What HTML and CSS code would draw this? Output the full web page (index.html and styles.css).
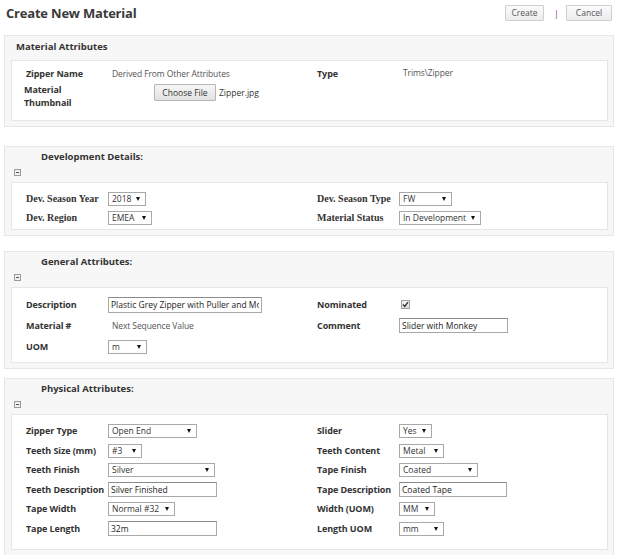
FILE: index.html
```html
<!DOCTYPE html>
<html>
<head>
<meta charset="utf-8">
<link rel="stylesheet" href="styles.css">
</head>
<body>
<div class="page">
  <div class="topbar">
    <h1 class="title">Create New Material</h1>
    <div class="actions">
      <button class="btn btn-create">Create</button>
      <span class="sep">|</span>
      <button class="btn btn-cancel">Cancel</button>
    </div>
  </div>

  <section class="panel panel-1">
    <div class="panel-head head-plain">Material Attributes</div>
    <div class="panel-body body-1">
      <div class="grid">
        <div class="row r1a">
          <div class="lbl">Zipper Name</div>
          <div class="val txt">Derived From Other Attributes</div>
          <div class="lbl">Type</div>
          <div class="val txt up">Trims\Zipper</div>
        </div>
        <div class="row r1b">
          <div class="lbl lbl-two"><span class="ln">Material</span><span class="ln">Thumbnail</span></div>
          <div class="val file-val"><button class="file-btn">Choose File</button><span class="file-name">Zipper.jpg</span></div>
          <div></div><div></div>
        </div>
      </div>
    </div>
  </section>

  <section class="panel panel-2">
    <div class="panel-head head-col">
      <div class="head-title">Development Details:</div>
      <div class="toggle"></div>
    </div>
    <div class="panel-body body-2">
      <div class="row r19">
        <div class="lbl serif">Dev. Season Year</div>
        <div class="val"><span class="selw w38"><select class="sel"><option>2018</option></select></span></div>
        <div class="lbl serif">Dev. Season Type</div>
        <div class="val"><span class="selw w53"><select class="sel"><option>FW</option></select></span></div>
      </div>
      <div class="row r19">
        <div class="lbl serif">Dev. Region</div>
        <div class="val"><span class="selw w44"><select class="sel"><option>EMEA</option></select></span></div>
        <div class="lbl serif">Material Status</div>
        <div class="val"><span class="selw w82"><select class="sel"><option>In Development</option></select></span></div>
      </div>
    </div>
  </section>

  <section class="panel panel-3">
    <div class="panel-head head-col">
      <div class="head-title">General Attributes:</div>
      <div class="toggle"></div>
    </div>
    <div class="panel-body body-3">
      <div class="row r21">
        <div class="lbl">Description</div>
        <div class="val"><input class="inp w154 h16" value="Plastic Grey Zipper with Puller and Monkey"></div>
        <div class="lbl">Nominated</div>
        <div class="val"><span class="chk"><svg width="7" height="7" viewBox="0 0 7 7"><path d="M1 3.6 L2.8 5.4 L6 1.2" fill="none" stroke="#333" stroke-width="1.4"/></svg></span></div>
      </div>
      <div class="row r21">
        <div class="lbl">Material #</div>
        <div class="val txt">Next Sequence Value</div>
        <div class="lbl">Comment</div>
        <div class="val"><input class="inp w109" value="Slider with Monkey"></div>
      </div>
      <div class="row r21">
        <div class="lbl">UOM</div>
        <div class="val"><span class="selw w39"><select class="sel"><option>m</option></select></span></div>
        <div></div><div></div>
      </div>
    </div>
  </section>

  <section class="panel panel-4">
    <div class="panel-head head-col">
      <div class="head-title">Physical Attributes:</div>
      <div class="toggle"></div>
    </div>
    <div class="panel-body body-4">
      <div class="row r195">
        <div class="lbl">Zipper Type</div>
        <div class="val"><span class="selw w89"><select class="sel"><option>Open End</option></select></span></div>
        <div class="lbl">Slider</div>
        <div class="val"><span class="selw w33"><select class="sel"><option>Yes</option></select></span></div>
      </div>
      <div class="row r195">
        <div class="lbl">Teeth Size (mm)</div>
        <div class="val"><span class="selw w34"><select class="sel"><option>#3</option></select></span></div>
        <div class="lbl">Teeth Content</div>
        <div class="val"><span class="selw w45"><select class="sel"><option>Metal</option></select></span></div>
      </div>
      <div class="row r195">
        <div class="lbl">Teeth Finish</div>
        <div class="val"><span class="selw w107"><select class="sel"><option>Silver</option></select></span></div>
        <div class="lbl">Tape Finish</div>
        <div class="val"><span class="selw w79"><select class="sel"><option>Coated</option></select></span></div>
      </div>
      <div class="row r195">
        <div class="lbl">Teeth Description</div>
        <div class="val"><input class="inp w109" value="Silver Finished"></div>
        <div class="lbl">Tape Description</div>
        <div class="val"><input class="inp w108" value="Coated Tape"></div>
      </div>
      <div class="row r195">
        <div class="lbl">Tape Width</div>
        <div class="val"><span class="selw w67"><select class="sel"><option>Normal #32</option></select></span></div>
        <div class="lbl">Width (UOM)</div>
        <div class="val"><span class="selw w36"><select class="sel"><option>MM</option></select></span></div>
      </div>
      <div class="row r195">
        <div class="lbl">Tape Length</div>
        <div class="val"><input class="inp w109" value="32m"></div>
        <div class="lbl">Length UOM</div>
        <div class="val"><span class="selw w45"><select class="sel"><option>mm</option></select></span></div>
      </div>
    </div>
  </section>
</div>
</body>
</html>
```

FILE: styles.css
```css
* { box-sizing: border-box; }
html, body { margin: 0; padding: 0; background: #ffffff; }
body {
  font-family: "Open Sans", "Noto Sans", Arial, sans-serif;
  color: #333333;
  font-size: 9px;
}
.page { width: 619px; height: 555px; overflow: hidden; }

.topbar {
  display: flex;
  justify-content: space-between;
  align-items: flex-start;
  height: 35px;
  padding: 5px 7px 0 6px;
}
.title {
  margin: 0;
  font-size: 13px;
  font-weight: 700;
  color: #3a3a3a;
  line-height: 17px;
  letter-spacing: -0.2px;
}
.actions { display: flex; align-items: center; height: 16px; }
.btn {
  font-family: "Open Sans", Arial, sans-serif;
  font-size: 8.5px;
  color: #555;
  height: 16px;
  padding: 0;
  border: 1px solid #cfcfcf;
  background: linear-gradient(#fbfbfb, #ececec);
  border-radius: 1px;
  line-height: 14px;
}
.btn-create { width: 39px; }
.btn-cancel { width: 46px; }
.sep { color: #8b3d8b; font-size: 9px; margin: 0 7px 0 10px; }

.panel {
  margin-left: 4px;
  width: 610px;
  background: #f7f7f7;
  border: 1px solid #e6e6e6;
  padding: 0 5px 5px 6px;
}
.panel-2 { margin-top: 19px; }
.panel-3 { margin-top: 15px; }
.panel-4 { margin-top: 9px; }

.panel-head { font-weight: 700; color: #333; font-size: 9.5px; }
.head-plain { height: 24px; padding: 4px 0 0 5px; line-height: 14px; }
.head-col { height: 35px; position: relative; }
.head-title { padding: 3px 0 0 30px; line-height: 14px; }
.toggle {
  width: 7px;
  height: 7px;
  border: 1px solid #9a9a9a;
  background: #f0f0f0;
  margin: 5px 0 0 3px;
  position: relative;
}
.toggle::after {
  content: "";
  position: absolute;
  left: 1px; top: 2px;
  width: 3px; height: 1px;
  background: #555;
}

.panel-body {
  background: #ffffff;
  border: 1px solid #e6e6e6;
  padding-left: 14px;
}
.body-1 { padding-top: 3px; height: 61px; }
.body-2 { padding-top: 6px; height: 48px; }
.body-3 { padding-top: 6px; height: 76px; }
.body-4 { padding-top: 6px; height: 136px; }

.row {
  display: grid;
  grid-template-columns: 82px 209px 82px 1fr;
  align-items: center;
}
.r1a { height: 19px; }
.r1b { height: 26px; align-items: start; padding-top: 1px; }
.r19 { height: 19px; }
.r21 { height: 21px; }
.r195 { height: 19.5px; }

.lbl {
  font-weight: 700;
  color: #333;
  font-size: 9px;
  white-space: nowrap;
  letter-spacing: -0.1px;
}
.lbl.serif {
  font-family: "Liberation Serif", "Times New Roman", serif;
  font-size: 10px;
  letter-spacing: 0;
}
.lbl-two {
  display: flex;
  flex-direction: column;
  margin-left: -2px;
}
.ln { display: block; line-height: 12.5px; height: 12.5px; }
.txt { padding-left: 4px; color: #555; font-size: 8.5px; letter-spacing: -0.1px; }
.up { margin-top: -3px; }

.file-val { display: flex; align-items: center; margin-left: 46px; }
.file-btn {
  font-family: "Open Sans", Arial, sans-serif;
  font-size: 8.5px;
  color: #333;
  height: 17px;
  width: 62px;
  padding: 0;
  border: 1px solid #b5b5b5;
  background: linear-gradient(#f6f6f6, #e2e2e2);
  border-radius: 1px;
}
.file-name { margin-left: 3px; color: #333; font-size: 8.5px; }

.selw { display: inline-block; position: relative; height: 14px; vertical-align: middle; }
.selw::after {
  content: "";
  position: absolute;
  right: 6px;
  top: 5px;
  border-left: 2.5px solid transparent;
  border-right: 2.5px solid transparent;
  border-top: 4px solid #111;
  pointer-events: none;
}
.sel {
  -webkit-appearance: none;
  appearance: none;
  width: 100%;
  height: 14px;
  border: 1px solid #a9a9a9;
  border-radius: 0;
  background: #fff;
  font-family: "Open Sans", Arial, sans-serif;
  font-size: 8.5px;
  color: #333;
  padding: 0 0 0 3px;
  line-height: 12px;
  display: block;
}
.w33 { width: 33px; } .w34 { width: 34px; } .w36 { width: 36px; } .w38 { width: 38px; }
.w39 { width: 39px; } .w44 { width: 44px; } .w45 { width: 45px; } .w53 { width: 53px; }
.w67 { width: 67px; } .w79 { width: 79px; } .w82 { width: 82px; } .w89 { width: 89px; }
.w107 { width: 107px; } .w108 { width: 108px; } .w109 { width: 109px; } .w154 { width: 154px; }

.inp {
  display: block;
  height: 15px;
  border: 1px solid #a9a9a9;
  border-top-color: #8a8a8a;
  background: #fff;
  font-family: "Open Sans", Arial, sans-serif;
  font-size: 8.5px;
  color: #222;
  padding: 0 2px;
  border-radius: 0;
  outline: none;
}
.h16 { height: 16px; }

.chk {
  display: flex;
  align-items: center;
  justify-content: center;
  width: 9px;
  height: 9px;
  margin-left: 2px;
  border: 1px solid #a0a0a0;
  background: linear-gradient(#f4f4f4, #dedede);
}
```
